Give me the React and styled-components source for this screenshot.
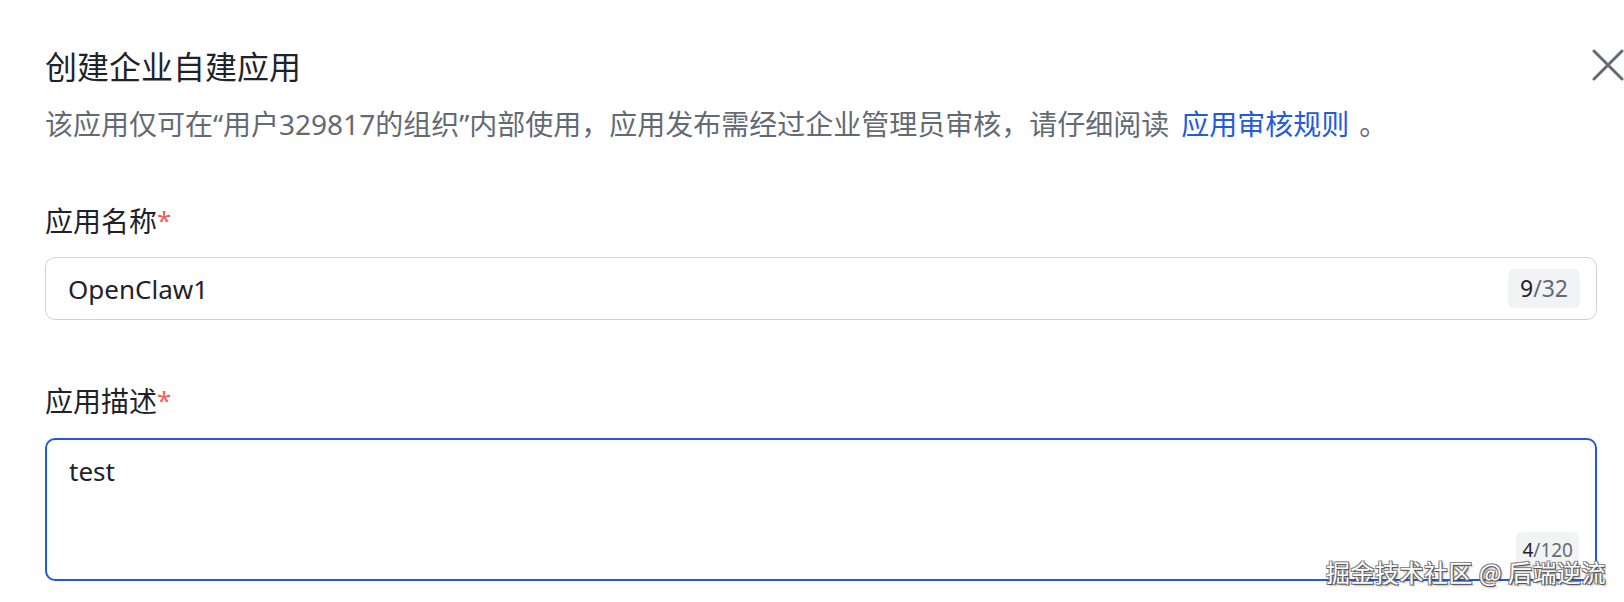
import React from "react";
import styled, { createGlobalStyle } from "styled-components";

const Global = createGlobalStyle`
  html, body { margin: 0; padding: 0; background: #fff; }
  body { font-family: "Noto Sans", "Noto Sans CJK SC", sans-serif; -webkit-font-smoothing: antialiased; }
  * { box-sizing: border-box; }
`;

const Page = styled.div`
  position: relative;
  width: 1624px;
  height: 602px;
  overflow: hidden;
  padding: 45px 0 0 45px;
  display: flex;
  flex-direction: column;
`;

const Header = styled.div`
  display: flex;
  align-items: center;
  justify-content: space-between;
  height: 40px;
`;

const Title = styled.h1`
  margin: 0;
  font-size: 32px;
  line-height: 40px;
  font-weight: 400;
  color: #1f2329;
  font-family: "Noto Sans CJK SC", sans-serif;
`;

const CloseButton = styled.button`
  border: none;
  background: none;
  padding: 0;
  width: 32px;
  height: 32px;
  display: flex;
  align-items: center;
  justify-content: center;
  cursor: pointer;
`;

const Subtitle = styled.p`
  margin: 21px 0 0;
  font-size: 28px;
  line-height: 36px;
  color: #646a73;
  font-family: "Noto Sans", "Noto Sans CJK SC", sans-serif;
`;

const Link = styled.a`
  color: #245bdb;
  text-decoration: none;
  margin: 0 10px 0 12px;
`;

const Field = styled.div`
  display: flex;
  flex-direction: column;
  margin-top: ${(p) => p.$top}px;
  margin-right: 27px;
`;

const Label = styled.label`
  font-size: 28px;
  line-height: 36px;
  color: #1f2329;
  font-family: "Noto Sans CJK SC", sans-serif;
  display: flex;
  align-items: center;
`;

const Required = styled.span`
  color: #f25f5a;
  font-size: 26px;
  font-family: "Noto Sans", sans-serif;
`;

const Box = styled.div`
  position: relative;
  margin-top: ${(p) => p.$gap}px;
  height: ${(p) => p.$height}px;
  border: ${(p) => (p.$focused ? "2px solid #2159d9" : "1.5px solid #d0d3d6")};
  border-radius: 10px;
  display: flex;
  align-items: ${(p) => (p.$multiline ? "flex-start" : "center")};
  padding: ${(p) => (p.$multiline ? "13px 22px" : "0 16px 0 22px")};
`;

const Value = styled.span`
  flex: 1;
  font-size: 26px;
  line-height: 36px;
  color: #1f2329;
  font-family: "Noto Sans", "Noto Sans CJK SC", sans-serif;
`;

const Counter = styled.span`
  background: #f2f3f5;
  border-radius: 6px;
  font-size: ${(p) => p.$size}px;
  line-height: ${(p) => p.$h}px;
  height: ${(p) => p.$h}px;
  padding: 0 ${(p) => p.$pad}px;
  color: #646a73;
  font-family: "Noto Sans", sans-serif;
  ${(p) => (p.$corner ? `position: absolute; right: 16px; bottom: 11px;` : ``)}
`;

const Count = styled.span`
  color: #1f2329;
`;

const Watermark = styled.div`
  position: absolute;
  right: 18px;
  bottom: 16px;
  font-size: 24px;
  line-height: 28px;
  color: #fff;
  font-family: "Noto Sans CJK SC", sans-serif;
  letter-spacing: 0.5px;
  text-shadow: 1px 1px 0 #555, -1px -1px 0 #888, 1px -1px 0 #777, -1px 1px 0 #777, 2px 2px 2px rgba(0,0,0,0.3);
`;

export default function App() {
  return (
    <>
      <Global />
      <Page>
        <Header>
          <Title>创建企业自建应用</Title>
          <CloseButton aria-label="关闭">
            <svg width="32" height="32" viewBox="0 0 32 32">
              <path d="M2 2 L30 30 M30 2 L2 30" stroke="#646a73" strokeWidth="3" strokeLinecap="round" />
            </svg>
          </CloseButton>
        </Header>
        <Subtitle>
          该应用仅可在“用户329817的组织”内部使用，应用发布需经过企业管理员审核，请仔细阅读
          <Link href="#">应用审核规则</Link>。
        </Subtitle>

        <Field $top={60}>
          <Label>
            应用名称<Required>*</Required>
          </Label>
          <Box $gap={19} $height={63}>
            <Value>OpenClaw1</Value>
            <Counter $size={23} $h={39} $pad={12}>
              <Count>9</Count>/32
            </Counter>
          </Box>
        </Field>

        <Field $top={62}>
          <Label>
            应用描述<Required>*</Required>
          </Label>
          <Box $gap={20} $height={143} $focused $multiline>
            <Value>test</Value>
            <Counter $corner $size={19} $h={36} $pad={6}>
              <Count>4</Count>/120
            </Counter>
          </Box>
        </Field>

        <Watermark>掘金技术社区 @ 后端逆流</Watermark>
      </Page>
    </>
  );
}
